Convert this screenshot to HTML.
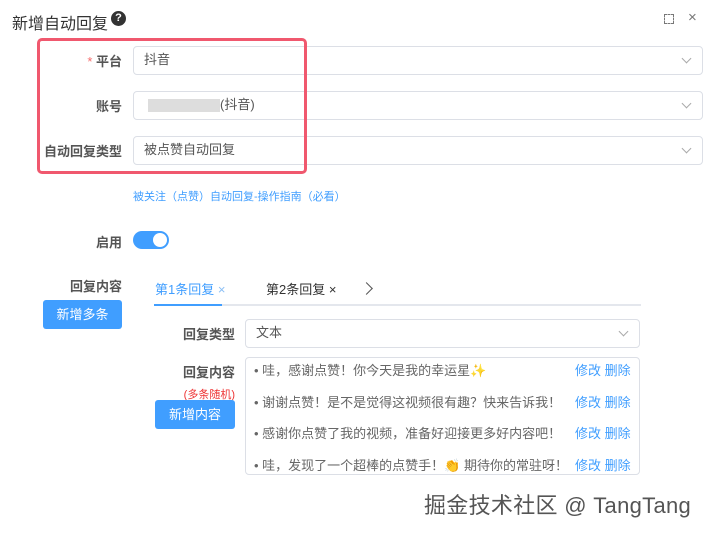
<!DOCTYPE html>
<html><head><meta charset="utf-8"><style>
*{box-sizing:border-box;margin:0;padding:0}
body{width:717px;height:534px;background:#fff;font-family:"Liberation Sans","Noto Sans CJK SC",sans-serif;position:relative;overflow:hidden;color:#333}
.a{position:absolute}
.lbl{font-size:13px;color:#555;font-weight:bold;text-align:right}
.inp{border:1px solid #dcdfe6;border-radius:4px;height:29px;font-size:13px;color:#555;padding:0 10px;line-height:25px}
.chev{position:absolute;right:12px;top:8px;width:7px;height:7px;border-right:1px solid #aaa;border-bottom:1px solid #aaa;transform:rotate(45deg)}
.btn{background:#409eff;color:#fff;border-radius:3px;font-size:13px;text-align:center}
.row{position:absolute;left:8px;font-size:13px;color:#666;width:380px;line-height:16px}
.ops{position:absolute;left:329px;font-size:13px;color:#409eff;line-height:16px}
</style></head><body>
<div class="a" style="left:12px;top:10px;font-size:16px;color:#333">新增自动回复</div>
<div class="a" style="left:111px;top:11px;width:15px;height:15px;border-radius:50%;background:#333;color:#fff;font-size:11px;font-weight:bold;text-align:center;line-height:15px">?</div>
<div class="a" style="left:664px;top:14px;width:10px;height:10px;border:1px dashed #777"></div>
<div class="a" style="left:688px;top:9px;font-size:15px;color:#777">×</div>

<div class="a" style="left:37px;top:38px;width:270px;height:136px;border:3px solid #f0586e;border-radius:5px;z-index:2"></div>

<div class="a lbl" style="left:60px;top:51px;width:62px"><span style="color:#f56c6c;font-weight:normal">* </span>平台</div>
<div class="a inp" style="left:133px;top:46px;width:570px">抖音<i class="chev"></i></div>
<div class="a lbl" style="left:60px;top:96px;width:62px">账号</div>
<div class="a inp" style="left:133px;top:91px;width:570px"><span style="display:inline-block;width:72px;height:13px;background:#ddd;vertical-align:middle;margin-left:4px"></span>(抖音)<i class="chev"></i></div>
<div class="a lbl" style="left:40px;top:141px;width:82px">自动回复类型</div>
<div class="a inp" style="left:133px;top:136px;width:570px">被点赞自动回复<i class="chev"></i></div>

<div class="a" style="left:133px;top:188px;font-size:11px;color:#409eff">被关注（点赞）自动回复-操作指南（必看）</div>
<div class="a lbl" style="left:60px;top:232px;width:62px">启用</div>
<div class="a" style="left:133px;top:231px;width:36px;height:18px;border-radius:9px;background:#409eff"><div style="position:absolute;right:2px;top:2px;width:14px;height:14px;border-radius:50%;background:#fff"></div></div>

<div class="a lbl" style="left:60px;top:276px;width:62px">回复内容</div>
<div class="a btn" style="left:43px;top:300px;width:79px;height:29px;line-height:29px">新增多条</div>

<div class="a" style="left:155px;top:279px;font-size:13px;color:#409eff">第1条回复 <span style="color:#8bbff5">×</span></div>
<div class="a" style="left:266px;top:279px;font-size:13px;color:#333">第2条回复 ×</div>
<div class="a" style="left:362px;top:284px;width:9px;height:9px;border-right:1.5px solid #555;border-top:1.5px solid #555;transform:rotate(45deg)"></div>
<div class="a" style="left:154px;top:304px;width:487px;height:2px;background:#e4e7ed"></div>
<div class="a" style="left:154px;top:304px;width:68px;height:2px;background:#409eff"></div>

<div class="a lbl" style="left:170px;top:324px;width:65px">回复类型</div>
<div class="a inp" style="left:245px;top:319px;width:395px">文本<i class="chev"></i></div>
<div class="a lbl" style="left:170px;top:362px;width:65px">回复内容</div>
<div class="a" style="left:170px;top:386px;width:65px;text-align:right;font-size:11px;color:#e33">(多条随机)</div>
<div class="a btn" style="left:155px;top:400px;width:80px;height:29px;line-height:29px">新增内容</div>
<div class="a" style="left:245px;top:357px;width:395px;height:118px;border:1px solid #dcdfe6;border-radius:4px;overflow:hidden">
<div class="row" style="top:5px">• 哇，感谢点赞！你今天是我的幸运星✨</div><div class="ops" style="top:5px">修改 删除</div>
<div class="row" style="top:37px">• 谢谢点赞！是不是觉得这视频很有趣？快来告诉我！</div><div class="ops" style="top:37px">修改 删除</div>
<div class="row" style="top:68px">• 感谢你点赞了我的视频，准备好迎接更多好内容吧！</div><div class="ops" style="top:68px">修改 删除</div>
<div class="row" style="top:100px">• 哇，发现了一个超棒的点赞手！👏 期待你的常驻呀！</div><div class="ops" style="top:100px">修改 删除</div>
</div>
<div class="a" style="left:424px;top:488px;font-size:22px;color:#555;letter-spacing:0.3px;text-shadow:0 0 2px #fff">掘金技术社区 @ TangTang</div>
</body></html>
